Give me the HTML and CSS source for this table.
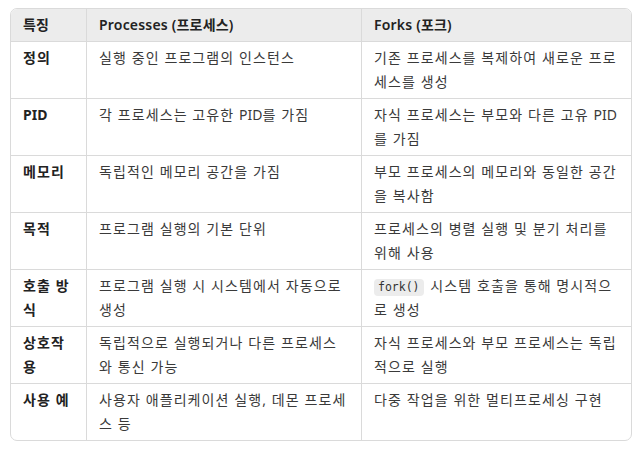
FILE: index.html
```html
<!DOCTYPE html>
<html lang="ko">
<head>
<meta charset="utf-8">
<link rel="stylesheet" href="styles.css">
</head>
<body>
<div class="wrap">
<table class="cmp">
<colgroup><col class="c1"><col class="c2"><col class="c3"></colgroup>
<thead>
<tr><th>특징</th><th>Processes (프로세스)</th><th>Forks (포크)</th></tr>
</thead>
<tbody>
<tr><td class="k">정의</td><td>실행 중인 프로그램의 인스턴스</td><td>기존 프로세스를 복제하여 새로운 프로세스를 생성</td></tr>
<tr><td class="k lat">PID</td><td>각 프로세스는 고유한 <span class="lat">PID</span>를 가짐</td><td>자식 프로세스는 부모와 다른 고유 <span class="lat">PID</span>를 가짐</td></tr>
<tr><td class="k">메모리</td><td>독립적인 메모리 공간을 가짐</td><td>부모 프로세스의 메모리와 동일한 공간을 복사함</td></tr>
<tr><td class="k">목적</td><td>프로그램 실행의 기본 단위</td><td>프로세스의 병렬 실행 및 분기 처리를 위해 사용</td></tr>
<tr><td class="k">호출 방식</td><td>프로그램 실행 시 시스템에서 자동으로 생성</td><td><code>fork()</code> 시스템 호출을 통해 명시적으로 생성</td></tr>
<tr><td class="k">상호작용</td><td>독립적으로 실행되거나 다른 프로세스와 통신 가능</td><td>자식 프로세스와 부모 프로세스는 독립적으로 실행</td></tr>
<tr><td class="k">사용 예</td><td>사용자 애플리케이션 실행, 데몬 프로세스 등</td><td>다중 작업을 위한 멀티프로세싱 구현</td></tr>
</tbody>
</table>
</div>
</body>
</html>
```
FILE: styles.css
```css
html, body {
  margin: 0;
  padding: 0;
  background: #ffffff;
}
body {
  font-family: "Noto Sans", "Noto Sans CJK KR", sans-serif;
  font-size: 14px;
  color: #3a3a3a;
}
.wrap {
  margin: 8px 0 0 10px;
  width: 620px;
  border: 1px solid #dadada;
  border-radius: 7px;
  overflow: hidden;
}
.cmp {
  width: 620px;
  border-collapse: separate;
  border-spacing: 0;
  table-layout: fixed;
}
.c1 { width: 76px; }
.c2 { width: 275px; }
.c3 { width: 269px; }
th, td {
  text-align: left;
  vertical-align: top;
  padding: 4px 12px 4px 12px;
  line-height: 24px;
  border-right: 1px solid #dadada;
  border-bottom: 1px solid #dadada;
}
td {
  letter-spacing: 1.1px;
}
.lat {
  letter-spacing: 0;
}
th:last-child, td:last-child {
  border-right: none;
}
tbody tr:last-child td {
  border-bottom: none;
}
th {
  background: #ececec;
  font-weight: 600;
  color: #222222;
  letter-spacing: 0.2px;
}
td.k {
  font-weight: 700;
  color: #222222;
}
code {
  display: inline-block;
  font-family: "DejaVu Sans Mono", "Liberation Mono", monospace;
  font-size: 11.5px;
  line-height: 17px;
  letter-spacing: 0;
  background: #ececec;
  border-radius: 4px;
  padding: 0 4px;
  margin-right: 2px;
  color: #333333;
}
```
